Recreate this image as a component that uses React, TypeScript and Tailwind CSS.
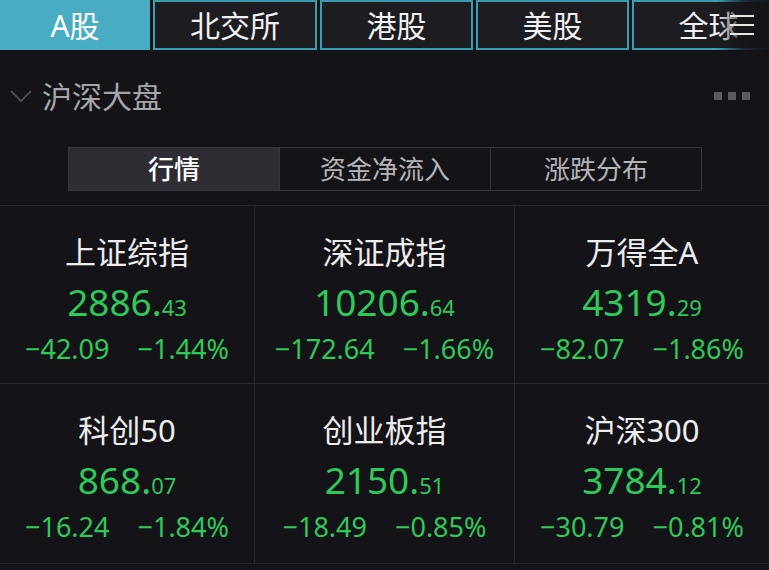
import React from "react";

const tabs = [
  { label: "A股", w: "w-[150px]", active: true },
  { label: "北交所", w: "w-[164px]" },
  { label: "港股", w: "w-[153px]" },
  { label: "美股", w: "w-[153px]" },
  { label: "全球", w: "w-[153px]" },
];

const indices = [
  { name: "上证综指", int: "2886", dec: "43", chg: "−42.09", pct: "−1.44%" },
  { name: "深证成指", int: "10206", dec: "64", chg: "−172.64", pct: "−1.66%" },
  { name: "万得全A", int: "4319", dec: "29", chg: "−82.07", pct: "−1.86%" },
  { name: "科创50", int: "868", dec: "07", chg: "−16.24", pct: "−1.84%" },
  { name: "创业板指", int: "2150", dec: "51", chg: "−18.49", pct: "−0.85%" },
  { name: "沪深300", int: "3784", dec: "12", chg: "−30.79", pct: "−0.81%" },
];

function Cell({ item, col }: { item: (typeof indices)[number]; col: number }) {
  return (
    <div
      className={
        "flex flex-col items-center pt-[28px] " +
        (col < 2 ? "border-r border-[#28282d]" : "")
      }
    >
      <div className="text-[31px] leading-[36px] text-[#ececec]">{item.name}</div>
      <div className="mt-[10px] flex items-baseline text-[#31c85a] leading-[44px]">
        <span className="text-[37px]">{item.int}.</span>
        <span className="text-[22px]">{item.dec}</span>
      </div>
      <div className="mt-[4px] flex gap-[28px] text-[27px] leading-[32px] text-[#31c85a]">
        <span>{item.chg}</span>
        <span>{item.pct}</span>
      </div>
    </div>
  );
}

export default function App() {
  return (
    <div className="relative h-[570px] w-[769px] overflow-hidden bg-[#141318] font-['Noto_Sans','Noto_Sans_CJK_SC',sans-serif]">
      {/* Market tabs */}
      <div className="flex h-[50px] gap-[3px] overflow-hidden">
        {tabs.map((t) =>
          t.active ? (
            <div
              key={t.label}
              className={`${t.w} flex shrink-0 items-center justify-center bg-[#48adc3] text-[30px] text-white`}
            >
              {t.label}
            </div>
          ) : (
            <div
              key={t.label}
              className={`${t.w} flex shrink-0 items-center justify-center border-2 border-[#3b9caf] bg-[#1d1d21] text-[30px] text-[#f0f0f0]`}
            >
              {t.label}
            </div>
          )
        )}
      </div>
      <div className="absolute right-0 top-0 flex h-[50px] w-[52px] items-center justify-end bg-gradient-to-r from-transparent via-[#141318cc] to-[#141318] pr-[14px]">
        <svg width="26" height="24" viewBox="0 0 26 24">
          <path d="M1 3h24M1 12h24M1 21h24" stroke="#e6e6e6" strokeWidth="2" />
        </svg>
      </div>

      {/* Section header */}
      <div className="mt-[26px] flex h-[40px] items-center">
        <svg className="ml-[10px]" width="22" height="12" viewBox="0 0 22 12">
          <path d="M1 1l10 10L21 1" fill="none" stroke="#5a5a5e" strokeWidth="1.5" />
        </svg>
        <span className="ml-[10px] text-[30px] text-[#a6a6a8]">沪深大盘</span>
        <div className="ml-auto mr-[19px] flex gap-[6px]">
          <span className="h-[8px] w-[8px] bg-[#5a5a5e]" />
          <span className="h-[8px] w-[8px] bg-[#5a5a5e]" />
          <span className="h-[8px] w-[8px] bg-[#5a5a5e]" />
        </div>
      </div>

      {/* Segmented control */}
      <div className="ml-[68px] mt-[31px] flex h-[44px] w-[634px] border border-[#36363b] text-[26px]">
        <div className="flex flex-1 items-center justify-center bg-[#2e2d33] font-medium text-white">行情</div>
        <div className="flex flex-1 items-center justify-center border-l border-[#36363b] text-[#b4b4b6]">资金净流入</div>
        <div className="flex flex-1 items-center justify-center border-l border-[#36363b] text-[#b4b4b6]">涨跌分布</div>
      </div>

      {/* Index grid */}
      <div className="mt-[14px] grid grid-cols-[255px_260px_1fr] grid-rows-[178px_180px] border-t border-[#28282d]">
        {indices.map((it, i) => (
          <div key={it.name} className="grid border-b border-[#28282d]">
            <Cell item={it} col={i % 3} />
          </div>
        ))}
      </div>
    </div>
  );
}
